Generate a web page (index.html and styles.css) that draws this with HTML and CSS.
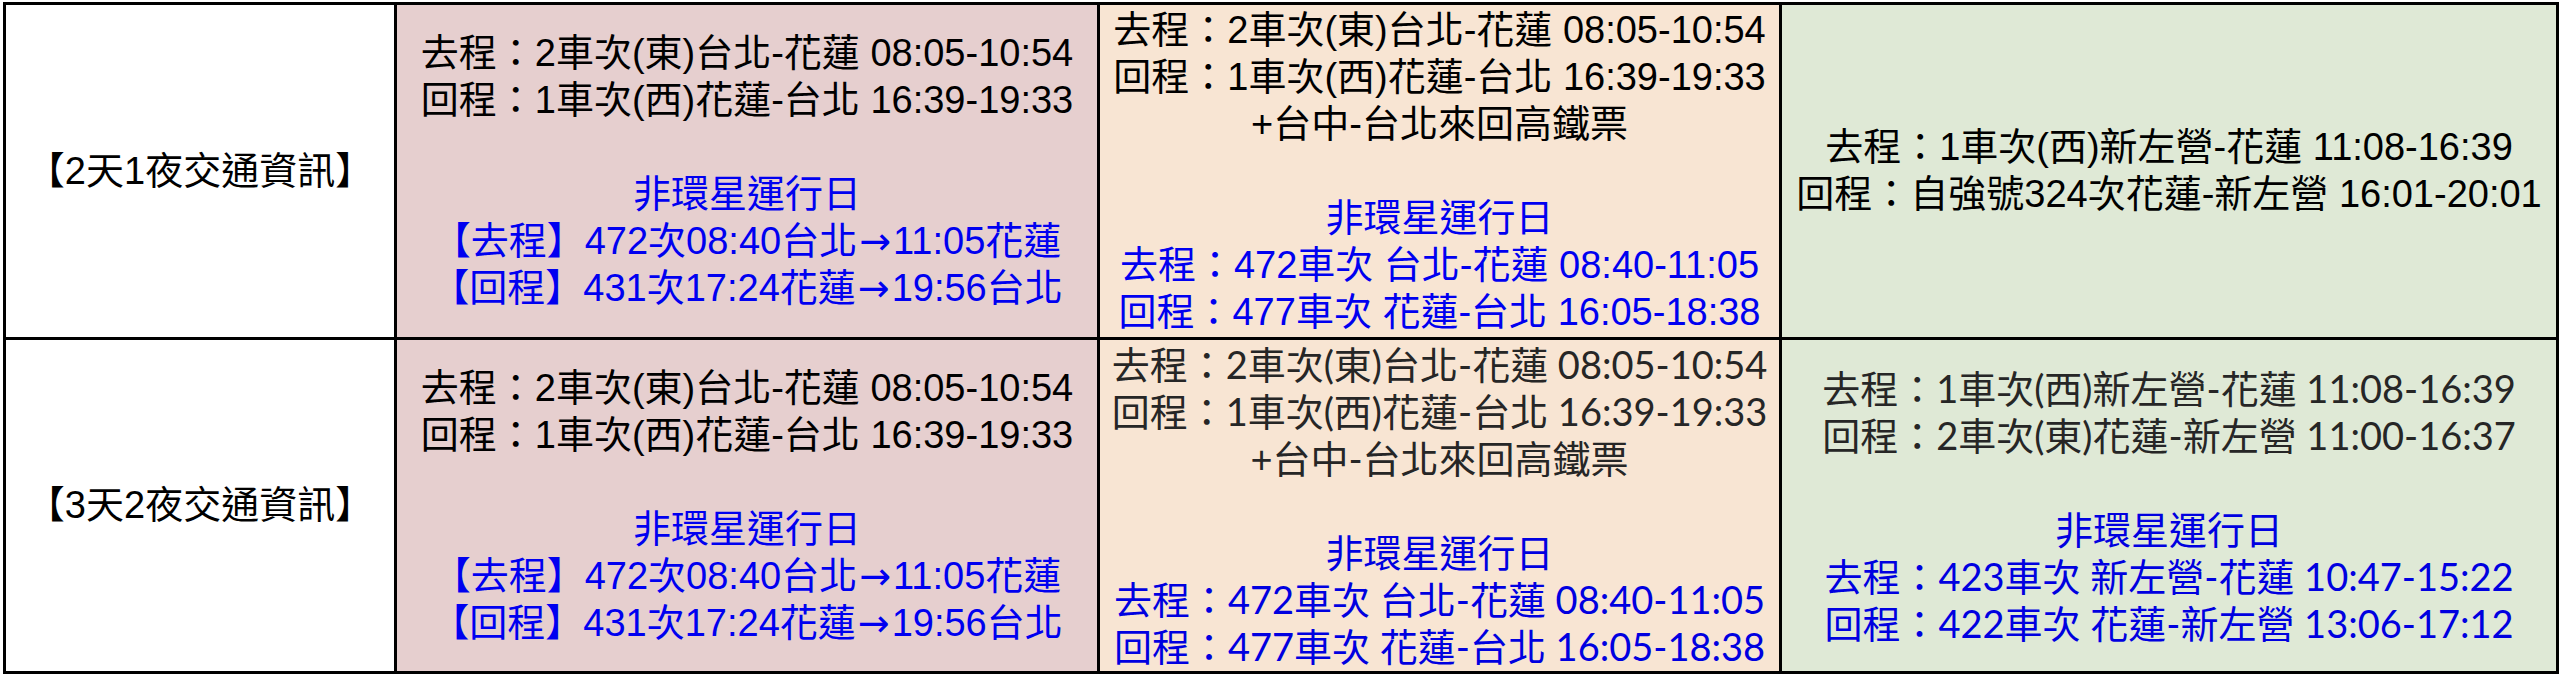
FILE: index.html
```html
<!DOCTYPE html>
<html lang="zh-Hant">
<head>
<meta charset="utf-8">
<title>交通資訊</title>
<link rel="stylesheet" href="styles.css">
</head>
<body>
<div class="table">
  <div class="cell head"><div class="line">【2天1夜交通資訊】</div></div>
  <div class="cell pink">
    <div class="line">去程：2車次(東)台北-花蓮 08:05-10:54</div>
    <div class="line">回程：1車次(西)花蓮-台北 16:39-19:33</div>
    <div class="gap"></div>
    <div class="line blue">非環星運行日</div>
    <div class="line blue">【去程】472次08:40台北<span class="arrow">→</span>11:05花蓮</div>
    <div class="line blue">【回程】431次17:24花蓮<span class="arrow">→</span>19:56台北</div>
  </div>
  <div class="cell peach">
    <div class="line">去程：2車次(東)台北-花蓮 08:05-10:54</div>
    <div class="line">回程：1車次(西)花蓮-台北 16:39-19:33</div>
    <div class="line">+台中-台北來回高鐵票</div>
    <div class="gap"></div>
    <div class="line blue">非環星運行日</div>
    <div class="line blue">去程：472車次 台北-花蓮 08:40-11:05</div>
    <div class="line blue">回程：477車次 花蓮-台北 16:05-18:38</div>
  </div>
  <div class="cell green">
    <div class="line">去程：1車次(西)新左營-花蓮 11:08-16:39</div>
    <div class="line">回程：自強號324次花蓮-新左營 16:01-20:01</div>
  </div>

  <div class="cell head"><div class="line">【3天2夜交通資訊】</div></div>
  <div class="cell pink">
    <div class="line">去程：2車次(東)台北-花蓮 08:05-10:54</div>
    <div class="line">回程：1車次(西)花蓮-台北 16:39-19:33</div>
    <div class="gap"></div>
    <div class="line blue">非環星運行日</div>
    <div class="line blue">【去程】472次08:40台北<span class="arrow">→</span>11:05花蓮</div>
    <div class="line blue">【回程】431次17:24花蓮<span class="arrow">→</span>19:56台北</div>
  </div>
  <div class="cell peach alt">
    <div class="line">去程：2車次(東)台北-花蓮 08:05-10:54</div>
    <div class="line">回程：1車次(西)花蓮-台北 16:39-19:33</div>
    <div class="line">+台中-台北來回高鐵票</div>
    <div class="gap"></div>
    <div class="line blue">非環星運行日</div>
    <div class="line blue">去程：472車次 台北-花蓮 08:40-11:05</div>
    <div class="line blue">回程：477車次 花蓮-台北 16:05-18:38</div>
  </div>
  <div class="cell green alt">
    <div class="line">去程：1車次(西)新左營-花蓮 11:08-16:39</div>
    <div class="line">回程：2車次(東)花蓮-新左營 11:00-16:37</div>
    <div class="gap"></div>
    <div class="line blue">非環星運行日</div>
    <div class="line blue">去程：423車次 新左營-花蓮 10:47-15:22</div>
    <div class="line blue">回程：422車次 花蓮-新左營 13:06-17:12</div>
  </div>
</div>
</body>
</html>
```
FILE: styles.css
```css
html, body {
  margin: 0;
  padding: 0;
  background: #ffffff;
}

body {
  padding: 2px 0 0 3px;
  font-family: "Liberation Sans", "Noto Sans CJK TC", sans-serif;
  font-size: 38px;
  line-height: 47px;
  color: #000000;
}

.table {
  display: grid;
  grid-template-columns: 391px 703px 682px 777px;
  grid-template-rows: 335px 334px;
  width: max-content;
  border-left: 3px solid #000;
  border-top: 3px solid #000;
}

.cell {
  box-sizing: border-box;
  border-right: 3px solid #000;
  border-bottom: 3px solid #000;
  display: flex;
  flex-direction: column;
  justify-content: center;
  align-items: center;
  text-align: center;
  overflow: hidden;
}

.line {
  white-space: nowrap;
  line-height: 47px;
}

.gap {
  height: 47px;
}

.arrow {
  font-family: "DejaVu Sans", sans-serif;
  line-height: 1;
  padding: 0 2px;
}

.head { background: #ffffff; }
.pink { background: #e6cfcf; }
.peach { background: #f8e5d3; }
.green { background: #dfe9d6; }

.blue { color: #0000f0; }

.alt {
  font-family: "Lato", "Noto Sans CJK TC", sans-serif;
  color: #262626;
}
.alt .blue { color: #0000e0; }
```
